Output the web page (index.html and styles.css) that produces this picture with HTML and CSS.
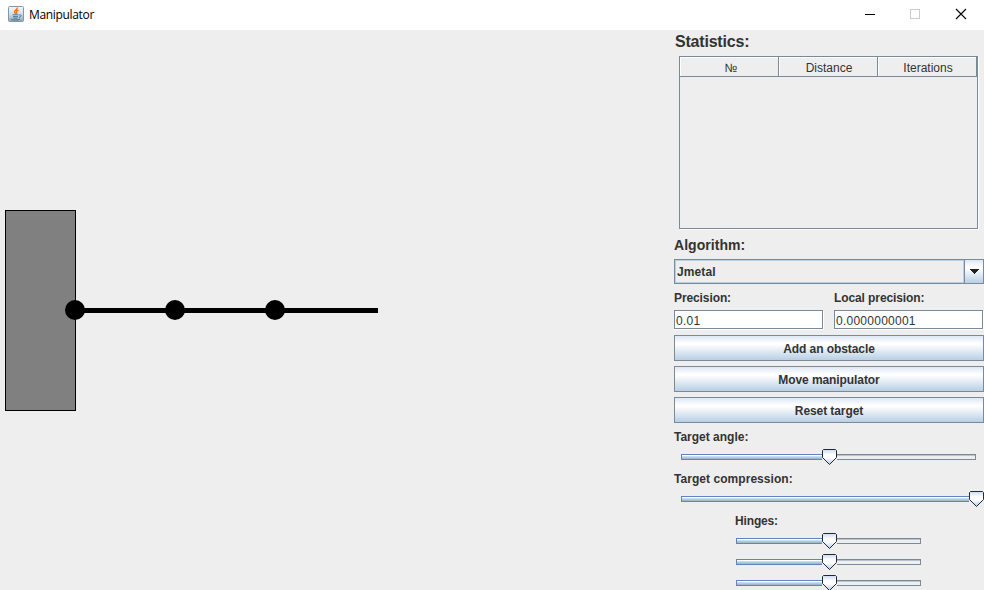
FILE: index.html
```html
<!DOCTYPE html>
<html lang="en">
<head>
<meta charset="utf-8">
<title>Manipulator</title>
<link rel="stylesheet" href="styles.css">
</head>
<body>
<svg width="0" height="0" class="defs">
  <defs>
    <linearGradient id="knob" x1="0" y1="0" x2="0" y2="1">
      <stop offset="0" stop-color="#c8d8f2"/><stop offset=".35" stop-color="#fff"/><stop offset=".55" stop-color="#fff"/><stop offset="1" stop-color="#b0cae8"/>
    </linearGradient>
    <linearGradient id="tile" x1="0" y1="0" x2="0" y2="1">
      <stop offset="0" stop-color="#f4f6f8"/><stop offset=".5" stop-color="#d5dfe6"/><stop offset="1" stop-color="#8ba5b8"/>
    </linearGradient>
    <symbol id="thumb" viewBox="0 0 15 16">
      <path d="M1.5 .5H13.5L14.5 1.5V8.5L7.5 15.5L.5 8.5V1.5Z" fill="url(#knob)" stroke="#222831"/>
    </symbol>
  </defs>
</svg>
<header class="titlebar">
  <svg class="logo" width="16" height="16" viewBox="0 0 16 16">
    <rect x=".5" y=".5" width="15" height="15" rx="1" fill="url(#tile)" stroke="#8298aa"/>
    <path d="M9.2 1.5C9.8 3.5 5.8 4.4 6.5 6.2L7.8 8M10.5 4C8 5 8 6 8.8 6.8L8.3 8" fill="none" stroke="#e8761c" stroke-width="1.4"/>
    <path d="M4.5 8.8H10.500M5 10.600H10M5.5 12.200H9.500M3 13.300C5 14.300 10 14.300 12 13.200M11 9C14 8 13.800 11 11 11.400" fill="none" stroke="#44708f" stroke-width=".9"/>
  </svg>
  <h1>Manipulator</h1>
  <svg class="controls" width="114" height="30" viewBox="0 0 114 30">
    <path d="M0 14.5H10" stroke="#000"/>
    <rect x="45.5" y="9.500" width="9" height="9" fill="none" stroke="#ccc"/>
    <path d="M91 9L101 19M101 9L91 19" stroke="#000" stroke-width="1.1"/>
  </svg>
</header>
<main>
  <svg class="scene" width="674" height="560" viewBox="0 30 674 560">
    <rect x="5.5" y="210.5" width="70" height="200" fill="#808080" stroke="#000"/>
    <path d="M75 310.500H378" stroke="#000" stroke-width="5"/>
    <circle cx="75" cy="310" r="10"/><circle cx="175" cy="310" r="10"/><circle cx="275" cy="310" r="10"/>
  </svg>
  <aside>
    <h2 class="stats-title"><span>Statistics:</span></h2>
    <div class="table"><div class="thead"><div class="num">№</div><div>Distance</div><div>Iterations</div></div></div>
    <h2 class="algorithm"><span>Algorithm:</span></h2>
    <div class="combo"><div class="value">Jmetal</div><div class="arrow"><svg width="10" height="5" viewBox="0 0 10 5" shape-rendering="crispEdges"><path d="M0 0H10L5 5Z" fill="#222"/></svg></div></div>
    <div class="fields">
      <div><label>Precision:</label><div class="input">0.01</div></div>
      <div><label>Local precision:</label><div class="input">0.0000000001</div></div>
    </div>
    <div class="buttons"><button>Add an obstacle</button><button>Move manipulator</button><button>Reset target</button></div>
    <div class="target">
      <label>Target angle:</label>
      <div class="slider half"><div class="fill"></div><svg class="thumb" width="15" height="16"><use href="#thumb"/></svg><div class="rest"></div></div>
    </div>
    <div class="target">
      <label class="compression">Target compression:</label>
      <div class="slider full"><div class="fill"></div><svg class="thumb" width="15" height="16"><use href="#thumb"/></svg></div>
    </div>
    <div class="hinges">
      <label>Hinges:</label>
      <div class="slider"><div class="fill"></div><svg class="thumb" width="15" height="16"><use href="#thumb"/></svg><div class="rest"></div></div>
      <div class="slider"><div class="fill"></div><svg class="thumb" width="15" height="16"><use href="#thumb"/></svg><div class="rest"></div></div>
      <div class="slider"><div class="fill"></div><svg class="thumb" width="15" height="16"><use href="#thumb"/></svg><div class="rest"></div></div>
    </div>
  </aside>
</main>
</body>
</html>
```
FILE: styles.css
```css
* { box-sizing: border-box; }
body { margin: 0; width: 984px; height: 590px; overflow: hidden; background: #eee; color: #333; font: 12px "Liberation Sans", Arial, sans-serif; }
.defs { display: block; height: 0; }
.titlebar { display: flex; height: 30px; background: #fff; align-items: center; padding-left: 8px; }
.logo { margin-top: -2px; }
h1 { margin: 0 auto 0 5px; font: 12px/30px "Open Sans", "Noto Sans", sans-serif; letter-spacing: -.33px; color: #000; }
.controls { margin-right: 5px; }
main { display: flex; height: 560px; overflow: hidden; }
.scene { flex: none; display: block; }
aside { width: 310px; flex: none; }
h2 { margin: 0; font-weight: bold; white-space: nowrap; }
.stats-title { font-size: 16px; line-height: 24px; height: 26px; padding-left: 1px; letter-spacing: -.2px; }
.table { width: 299px; height: 173px; margin-left: 5px; border: 1px solid #7a8a99; box-shadow: 1px 1px 0 #fff; }
.thead { display: flex; height: 20px; border-bottom: 1px solid #7a8a99; }
.thead div { width: 99px; border-right: 1px solid #7a8a99; box-shadow: inset 1px 1px 0 #fff; text-align: center; line-height: 22px; padding-left: 2px; }
.thead .num { padding-left: 4px; }
.algorithm { font-size: 14px; line-height: 33px; height: 30px; letter-spacing: .05px; }
.combo { height: 25px; display: flex; border: 1px solid #7a8a99; }
.value { flex: 1; border: 1px solid #b8cfe5; padding-left: 1px; font-weight: bold; line-height: 22px; letter-spacing: .1px; }
.arrow { width: 19px; border-left: 1px solid #7a8a99; background: linear-gradient(#dde8f3, #fff 30%, #fff 35%, #b8cfe5); display: flex; align-items: center; justify-content: center; }
label { display: block; font-weight: bold; white-space: nowrap; }
.fields { display: flex; gap: 11px; height: 51px; }
.fields > div { width: 149px; }
.fields label { height: 26px; line-height: 28px; letter-spacing: -.1px; }
.input { height: 19px; border: 1px solid #7a8a99; background: #fff; box-shadow: 0 1px #fff, 1px 1px #fff; padding-left: 1px; line-height: 20px; letter-spacing: .25px; }
.buttons { display: grid; gap: 5px; }
button { display: block; width: 310px; height: 26px; border: 1px solid #7a8a99; background: linear-gradient(#dde8f3, #fff 30%, #fff 35%, #b8cfe5); font: bold 12px "Liberation Sans", Arial, sans-serif; letter-spacing: -.08px; color: #333; padding: 2px 0 0; }
.target { height: 42px; }
.target label { height: 26px; line-height: 28px; }
.target .compression { letter-spacing: .05px; }
.slider { display: flex; height: 16px; padding-top: 5px; }
.target .slider { width: 295px; margin-left: 7px; }
.fill, .rest { height: 6px; }
.fill { flex: none; width: 141px; border: 1px solid #6382bf; border-right: 0; background: linear-gradient(#fff 0 25%, #c8ddf0 25% 50%, #b0cce2 50% 75%, #a3b8cc 75%); }
.full .fill { width: 288px; }
.target .full { width: 303px; }
.rest { flex: 1; border: 1px solid #7a8a99; border-left: 0; box-shadow: inset 0 1px #b8c5d1; }
.thumb { flex: none; margin-top: -5px; display: block; }
.hinges { padding-left: 61px; }
.hinges label { height: 26px; line-height: 28px; letter-spacing: -.15px; }
.hinges .slider { width: 185px; margin: 0 0 5px 1px; }
.hinges .fill { width: 86px; }
```
